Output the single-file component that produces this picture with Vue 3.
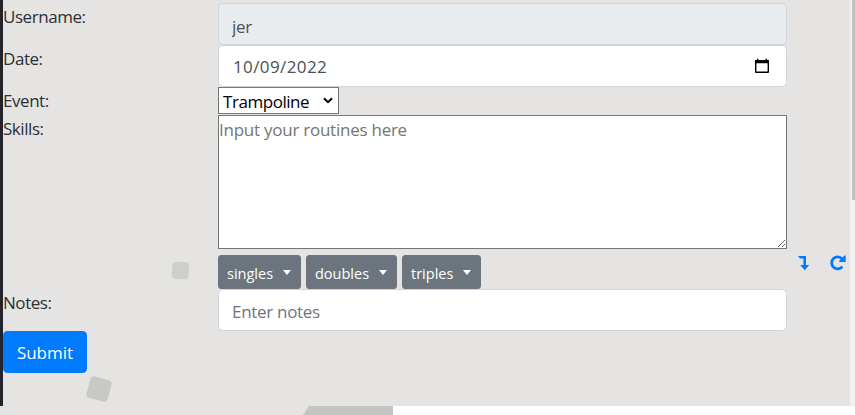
<script setup>
import { ref } from 'vue'

const username = ref('jer')
const date = ref('10/09/2022')
const skills = ref('')
const notes = ref('')
const groups = ['singles', 'doubles', 'triples']
</script>

<template>
  <div class="page">
    <main class="panel">
      <form class="form" @submit.prevent>
        <label class="label username">Username:</label>
        <input v-model="username" class="control jer" disabled />

        <label class="label date">Date:</label>
        <div class="control datebox">
          <span class="datetext">{{ date }}</span>
          <svg class="calendar" width="16" height="16" viewBox="0 0 16 16">
            <path d="M1.5 2H3V.7h1.4V2h7.2V.7H13V2h1.5q.5 0 .5.5V14q0 1-1 1H2q-1 0-1-1V2.500q0-.5.5-.5z M2.4 5.2v8.4h11.2V5.2z" fill="#000" fill-rule="evenodd" />
          </svg>
        </div>

        <label class="label event">Event:</label>
        <div class="event-cell">
          <div class="select">
            <span class="selecttext">Trampoline</span>
            <svg class="chevron" width="10" height="7" viewBox="0 0 10 7">
              <path d="M1 1.2 5 5.2 9 1.2" fill="none" stroke="#000" stroke-width="2" />
            </svg>
          </div>
        </div>

        <label class="label skills">Skills:</label>
        <div class="skills-cell">
          <textarea v-model="skills" class="routine" placeholder="Input your routines here"></textarea>
        </div>

        <div class="groups">
          <button v-for="g in groups" :key="g" type="button" class="group" :class="g">
            <span class="grouptext">{{ g }}</span><i class="caret"></i>
          </button>
        </div>
        <div class="tools">
          <svg class="down" width="12" height="16" viewBox="0 0 12 16">
            <path d="M0 1h8v9h3.2L6.8 15.2 2.2 10h3.2V3.6H2z" fill="#007bff" />
          </svg>
          <svg class="redo" width="16" height="16" viewBox="0 0 16 16">
            <path d="M12.3 11.7A6 6 0 1 1 12.200 4" fill="none" stroke="#007bff" stroke-width="2.8" />
            <path d="M15.700 .6V7H9.200V5.800L14.500 .6z" fill="#007bff" />
          </svg>
        </div>

        <label class="label notes">Notes:</label>
        <input v-model="notes" class="control enter" placeholder="Enter notes" />

        <button class="submit"><span>Submit</span></button>
      </form>
      <i class="cube small"></i>
      <i class="cube large"></i>
      <div class="scrollbar"><div class="thumb"></div></div>
    </main>
    <footer class="base">
      <svg width="393" height="9" viewBox="0 0 393 9">
        <path d="M0 0H393V9H0z" fill="#e5e4e2" />
        <path d="M309 0H393V9H303z" fill="#c4c4c2" />
      </svg>
    </footer>
  </div>
</template>

<style>
body {
  margin: 0;
  overflow: hidden;
}
</style>

<style scoped>
.page {
  width: 855px;
  height: 415px;
  overflow: hidden;
  background: #fff;
  color: #212529;
  font: 400 17px/27px 'Open Sans', 'Noto Sans', sans-serif;
}
.page * {
  box-sizing: border-box;
}
.panel {
  position: relative;
  display: flex;
  height: 406px;
  border-left: 3px solid #24232c;
  background: #e5e4e2;
}
.form {
  display: grid;
  flex: 1;
  grid-template-columns: 215px 569px 63px;
  grid-template-rows: 42px 42px 28px 140px 34px 42px 42px;
  padding-top: 3px;
}
.label {
  grid-column: 1;
  color: #2c3034;
  letter-spacing: -0.45px;
  white-space: nowrap;
}
.control {
  grid-column: 2;
  width: 569px;
  height: 42px;
  margin: 0;
  padding: 2px 13px 0;
  border: 1px solid #ced4da;
  border-radius: 4.5px;
  background: #fff;
  color: #495057;
  font: inherit;
  letter-spacing: -0.3px;
}
.jer {
  padding-top: 4px;
  background: #e9ecef;
}
.control::placeholder {
  color: #6c757d;
  opacity: 1;
}
.datebox {
  display: flex;
  align-items: center;
  justify-content: space-between;
  padding: 0 16px 0 14px;
}
.datetext {
  padding-top: 1px;
  letter-spacing: 0.4px;
}
.calendar {
  margin-top: -1px;
}
.event-cell {
  grid-column: 2;
}
.select {
  display: flex;
  align-items: center;
  justify-content: space-between;
  width: 121px;
  height: 27px;
  padding: 0 5px 0 4px;
  border: 1px solid #767676;
  background: #fff;
  color: #000;
}
.selecttext {
  padding-top: 2px;
  letter-spacing: -0.45px;
}
.routine {
  display: block;
  width: 569px;
  height: 134px;
  margin: 0;
  padding: 0;
  border: 1px solid #767676;
  border-radius: 0;
  background: #fff;
  font: inherit;
  letter-spacing: -0.25px;
}
.routine::placeholder {
  color: #757575;
}
.groups {
  display: flex;
  grid-column: 2;
  gap: 5px;
}
.group {
  display: flex;
  align-items: center;
  justify-content: space-between;
  height: 34px;
  padding: 3px 10px 0 9px;
  border: 0;
  border-radius: 3.5px;
  background: #6c757d;
  color: #fff;
  font: 14.5px/22px 'Open Sans', 'Noto Sans', sans-serif;
}
.singles { width: 83px; }
.doubles { width: 91px; }
.triples { width: 79px; }
.caret {
  margin-top: -2px;
  border: 4.5px solid transparent;
  border-width: 5px 4.5px 0;
  border-top-color: #fff;
}
.tools {
  display: flex;
  justify-content: space-between;
  padding: 0 4px 0 11px;
}
.notes {
  grid-row: 6;
}
.submit {
  grid-column: 1;
  width: 84px;
  height: 42px;
  padding: 0;
  border: 0;
  border-radius: 4.5px;
  background: #007bff;
  color: #fff;
  font: inherit;
}
.cube {
  position: absolute;
  border-radius: 4px;
}
.small {
  top: 262px;
  left: 169px;
  width: 17px;
  height: 17px;
  background: #cececc;
  transform: rotate(4deg);
}
.large {
  top: 378px;
  left: 85px;
  width: 22px;
  height: 22px;
  background: #c8c8c6;
  transform: rotate(15deg);
}
.scrollbar {
  width: 5px;
  padding-left: 2px;
  background: #f1f1f1;
}
.thumb {
  height: 200px;
  background: #c1c1c1;
}
.base svg {
  display: block;
}
</style>
